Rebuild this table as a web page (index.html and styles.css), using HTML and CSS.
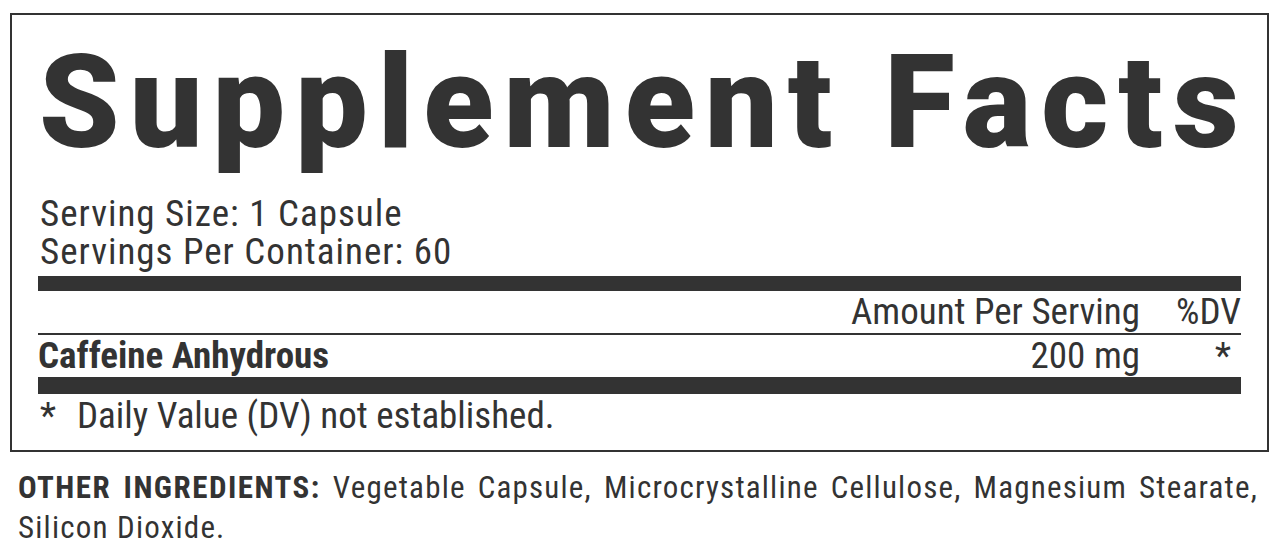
FILE: index.html
```html
<!DOCTYPE html>
<html>
<head>
<meta charset="utf-8">
<link rel="stylesheet" href="styles.css">
</head>
<body>
<div class="label">
  <h1 class="title">Supplement Facts</h1>
  <div class="serving">
    <div>Serving Size: 1 Capsule</div>
    <div>Servings Per Container: 60</div>
  </div>
  <div class="bar"></div>
  <div class="row head">
    <span class="name"></span>
    <span class="amt">Amount Per Serving</span>
    <span class="dv">%DV</span>
  </div>
  <div class="row item">
    <span class="name">Caffeine Anhydrous</span>
    <span class="amt">200 mg</span>
    <span class="dv star">*</span>
  </div>
  <div class="bar thick"></div>
  <div class="note"><span class="ast">*</span>Daily Value (DV) not established.</div>
</div>
<p class="other"><b>OTHER INGREDIENTS:</b> Vegetable Capsule, Microcrystalline Cellulose, Magnesium Stearate, Silicon Dioxide.</p>
</body>
</html>
```
FILE: styles.css
```css
html, body { margin: 0; padding: 0; background: #fff; }
body {
  font-family: "Roboto Condensed", "Roboto", sans-serif;
  font-stretch: condensed;
  color: #333;
  padding: 13px 8px 0 10px;
}
.label {
  border: 2px solid #333;
  padding: 0 26px;
  height: 439px;
  box-sizing: border-box;
}
.title {
  margin: 0;
  font-family: "Roboto", sans-serif;
  font-stretch: normal;
  font-weight: 900;
  font-size: 129px;
  line-height: 1;
  letter-spacing: 10px;
  padding-top: 23px;
  padding-left: 1px;
  height: 180px;
  box-sizing: border-box;
  white-space: nowrap;
}
.serving {
  font-size: 37px;
  line-height: 38px;
  letter-spacing: 1px;
  padding-left: 2px;
  margin-bottom: 5px;
}
.bar { height: 15px; background: #333; }
.bar.thick { height: 17px; }
.row { display: flex; font-size: 37px; line-height: 42px; }
.row .name { flex: 1; font-weight: 700; }
.row .amt { text-align: right; }
.row .dv { width: 101px; text-align: right; }
.row .star { padding-right: 10px; box-sizing: border-box; }
.head { border-bottom: 2px solid #333; }
.note { font-size: 37px; line-height: 44px; padding-left: 2px; }
.ast { display: inline-block; width: 37px; }
.other {
  margin: 16px 0 0 8px;
  width: 1240px;
  font-size: 31px;
  line-height: 40px;
  letter-spacing: 1.2px;
  text-align: justify;
}
.other b { font-weight: 700; letter-spacing: 1.5px; }
```
